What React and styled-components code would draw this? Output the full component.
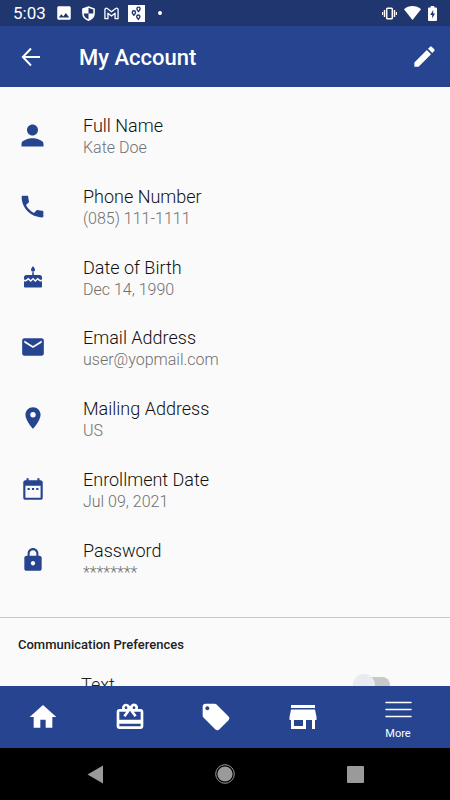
import React, { useState } from "react";
import styled, { createGlobalStyle } from "styled-components";
import {
  MdCardGiftcard,
  MdDateRange,
  MdEdit,
  MdEmail,
  MdHome,
  MdImage,
  MdLocalOffer,
  MdLock,
  MdPerson,
  MdPhone,
  MdPlace,
  MdStore,
} from "react-icons/md";

const GlobalStyle = createGlobalStyle`
  * {
    box-sizing: border-box;
  }

  body {
    margin: 0;
    font-family: Roboto, "Liberation Sans", sans-serif;
    background: #fafafa;
  }
`;

const Screen = styled.div`
  display: flex;
  flex-direction: column;
  height: 100vh;
  overflow: hidden;
`;

const StatusBar = styled.div`
  flex: none;
  display: flex;
  align-items: center;
  justify-content: space-between;
  height: 26px;
  padding: 0 13px;
  background: #20366f;
  color: white;

  svg {
    display: block;
  }
`;

const StatusGroup = styled.div`
  display: flex;
  align-items: center;
  gap: ${(props) => props.$gap}px;
`;

const Clock = styled.span`
  font-size: 17px;
  line-height: 26px;
`;

const Dot = styled.span`
  width: 4px;
  height: 4px;
  margin-left: 4px;
  border-radius: 50%;
  background: white;
`;

const AppBar = styled.header`
  flex: none;
  display: flex;
  align-items: center;
  height: 61px;
  padding: 0 13px 0 18px;
  background: #26448f;
  color: white;
`;

const IconButton = styled.button`
  display: flex;
  align-items: center;
  justify-content: center;
  width: 26px;
  height: 26px;
  padding: 0;
  border: none;
  background: none;
  color: inherit;
  cursor: pointer;

  svg {
    flex: none;
  }
`;

const Title = styled.h1`
  flex: 1;
  margin: 0 0 0 35px;
  padding-top: 2px;
  font-size: 22px;
  line-height: 28px;
  font-weight: 500;
`;

const Content = styled.main`
  flex: 1;
  min-height: 0;
  overflow-y: auto;
  scrollbar-width: none;
  background: #fafafa;
`;

const DetailList = styled.ul`
  display: grid;
  grid-auto-rows: 1fr;
  min-height: 495px;
  margin: 0;
  padding: 0 16px;
  list-style: none;
`;

const Section = styled.section`
  padding: ${(props) => props.$padding};
  border-bottom: ${(props) => (props.$divided ? "1px solid #c8c8c8" : "none")};
`;

const DetailRow = styled.li`
  display: flex;
  align-items: center;
  gap: 34px;
`;

const IconSlot = styled.span`
  flex: none;
  display: flex;
  justify-content: center;
  width: 33px;
  color: #26448f;
`;

const DetailText = styled.div`
  padding-top: 4px;
`;

const Label = styled.div`
  font-size: 18px;
  line-height: 22px;
  font-weight: 300;
  color: #111111;
`;

const Value = styled.div`
  font-size: 16px;
  line-height: 22px;
  font-weight: 300;
  color: #707070;
`;

const SectionTitle = styled.h2`
  margin: 0;
  font-size: 13px;
  line-height: 18px;
  font-weight: 500;
  color: #212121;
`;

const PreferenceRow = styled.label`
  display: flex;
  align-items: center;
  justify-content: space-between;
  padding: 20px 42px 20px 63px;
  font-size: 18px;
  line-height: 22px;
  font-weight: 300;
  color: #212121;
`;

const Switch = styled.input`
  appearance: none;
  position: relative;
  width: 34px;
  height: 16px;
  margin: 0;
  border-radius: 8px;
  background: #c8c8c8;
  cursor: pointer;

  &::before {
    content: "";
    position: absolute;
    top: -3px;
    left: ${(props) => (props.checked ? "15px" : "-3px")};
    width: 22px;
    height: 22px;
    border-radius: 50%;
    background: ${(props) => (props.checked ? "#26448f" : "#e8ebf0")};
  }
`;

const TabBar = styled.nav`
  flex: none;
  display: grid;
  grid-template-columns: repeat(4, 1fr) 104px;
  height: 62px;
  background: #26448f;
`;

const Tab = styled.a`
  display: flex;
  flex-direction: column;
  align-items: center;
  justify-content: center;
  gap: 8px;
  padding-top: ${(props) => (props.$labelled ? 8 : 0)}px;
  color: white;
  font-size: 11px;
  line-height: 16px;
  text-decoration: none;
`;

const SystemBar = styled.div`
  flex: none;
  display: grid;
  grid-template-columns: repeat(3, 1fr);
  justify-items: center;
  align-items: center;
  height: 52px;
  padding: 0 30px;
  background: black;
  color: #9a9a9a;
`;

const ShieldIcon = () => (
  <svg width="13" height="15" viewBox="0 0 14 16" fill="none">
    <path
      d="M7 1 L13 3.2 V7.5 C13 11 10.5 14 7 15.2 C3.5 14 1 11 1 7.5 V3.2 Z"
      stroke="white"
      strokeWidth="1.7"
    />
    <path d="M7 1 V8 H1 V3.2 Z M7 8 H13 C12.8 11.3 10.3 14 7 15.2 Z" fill="white" />
  </svg>
);

const MailIcon = () => (
  <svg width="15" height="13" viewBox="0 0 16 13" fill="none">
    <path
      d="M1 12 V2.3 C1 .9 2.5 .5 3.5 1.2 L8 4.7 L12.5 1.2 C13.5 .5 15 .9 15 2.3 V12 H11.8 V6.2 L8 9.2 L4.2 6.2 V12 Z"
      stroke="white"
      strokeWidth="1.4"
      strokeLinejoin="round"
    />
  </svg>
);

const PinsIcon = () => (
  <svg width="17" height="17" viewBox="0 0 17 17">
    <rect width="17" height="17" fill="white" />
    <g fill="white" stroke="#20366f" strokeWidth="1.4">
      <path d="M10.5 6.5 C9.3 5.2 8.9 4.3 8.9 3.7 A1.6 1.6 0 0 1 12.1 3.7 C12.1 4.3 11.700 5.2 10.5 6.5 Z" />
      <path d="M5.9 10.2 C4.7 8.9 4.3 8 4.3 7.4 A1.6 1.6 0 0 1 7.5 7.4 C7.5 8 7.1 8.9 5.9 10.2 Z" />
      <path d="M10.3 14.4 C9.1 13.1 8.7 12.2 8.7 11.6 A1.6 1.6 0 0 1 11.9 11.6 C11.9 12.2 11.5 13.1 10.3 14.4 Z" />
    </g>
  </svg>
);

const VibrateIcon = () => (
  <svg width="15" height="13" viewBox="0 0 15 13" fill="none" stroke="white">
    <rect x="4.7" y="1.2" width="5.6" height="10.6" rx=".8" strokeWidth="1.5" />
    <path d="M2.5 3 V10 M12.5 3 V10" strokeWidth="1.4" />
    <path d="M.6 5 V8 M14.4 5 V8" strokeWidth="1.2" />
  </svg>
);

const WifiIcon = () => (
  <svg width="17" height="14" viewBox="0 0 17 14" fill="white">
    <path d="M8.5 14 L0 3.3 C4.8 -1 12.2 -1 17 3.3 Z" />
  </svg>
);

const BatteryIcon = () => (
  <svg width="9" height="15" viewBox="0 0 9 15">
    <path d="M2.7 0 H6.3 V1.5 H8 Q9 1.5 9 2.5 V14 Q9 15 8 15 H1 Q0 15 0 14 V2.5 Q0 1.5 1 1.5 H2.7 Z" fill="white" />
    <path d="M5.2 4 L2.2 9 H4.2 V12.5 L7 7.5 H5.2 Z" fill="#20366f" />
  </svg>
);

const BackIcon = () => (
  <svg width="26" height="26" viewBox="0 0 26 26" fill="none" stroke="white" strokeWidth="1.9">
    <path d="M22 13 H5 M13 4.5 L4.8 13 L13 21.5" />
  </svg>
);

const CakeIcon = ({ size }) => (
  <svg width={size} height={size} viewBox="0 0 22 22" fill="currentColor">
    <path d="M11 0 C12.3 1.800 13 2.900 13 3.800 A2 2 0 0 1 9 3.800 C9 2.900 9.700 1.800 11 0 Z" />
    <path d="M10.200 6.300 H11.800 V9 H17.500 Q20 9 20 11.500 V13.600 Q18.700 14.300 17.500 13.200 L15.700 11.700 L13.300 14 L11 11.700 L8.700 14 L6.300 11.700 L4.500 13.200 Q3.300 14.300 2 13.600 V11.500 Q2 9 4.500 9 H10.200 Z" />
    <path d="M2 15.200 Q4 15.800 5.500 14.500 L6.300 13.800 L8.700 16 L11 13.800 L13.300 16 L15.700 13.800 L16.500 14.500 Q18 15.800 20 15.200 V20.500 Q20 21.500 19 21.500 H3 Q2 21.500 2 20.500 Z" />
  </svg>
);

const MenuIcon = () => (
  <svg width="27" height="17" viewBox="0 0 27 17" stroke="white" strokeWidth="1.5" strokeLinecap="round">
    <path d="M1 1.5 H26 M1 8.5 H26 M1 15.5 H26" />
  </svg>
);

const details = [
  { label: "Full Name", value: "Kate Doe", icon: MdPerson, size: 33 },
  { label: "Phone Number", value: "(085) 111-1111", icon: MdPhone, size: 29 },
  { label: "Date of Birth", value: "Dec 14, 1990", icon: CakeIcon, size: 22 },
  { label: "Email Address", value: "user@yopmail.com", icon: MdEmail, size: 26 },
  { label: "Mailing Address", value: "US", icon: MdPlace, size: 26 },
  { label: "Enrollment Date", value: "Jul 09, 2021", icon: MdDateRange, size: 26 },
  { label: "Password", value: "********", icon: MdLock, size: 26 },
];

const tabs = [
  { name: "Home", icon: MdHome, size: 32 },
  { name: "Rewards", icon: MdCardGiftcard, size: 32 },
  { name: "Offers", icon: MdLocalOffer, size: 32 },
  { name: "Stores", icon: MdStore, size: 36 },
];

const App = () => {
  const [textOn, setTextOn] = useState(false);

  return (
    <Screen>
      <GlobalStyle />
      <StatusBar>
        <StatusGroup $gap={9}>
          <Clock>5:03</Clock>
          <MdImage size={18} />
          <ShieldIcon />
          <MailIcon />
          <PinsIcon />
          <Dot />
        </StatusGroup>
        <StatusGroup $gap={7}>
          <VibrateIcon />
          <WifiIcon />
          <BatteryIcon />
        </StatusGroup>
      </StatusBar>

      <AppBar>
        <IconButton aria-label="Back">
          <BackIcon />
        </IconButton>
        <Title>My Account</Title>
        <IconButton aria-label="Edit">
          <MdEdit size={27} />
        </IconButton>
      </AppBar>

      <Content>
        <Section $padding="13px 0 22px" $divided>
          <DetailList>
            {details.map(({ label, value, icon: Icon, size }) => (
              <DetailRow key={label}>
                <IconSlot>
                  <Icon size={size} />
                </IconSlot>
                <DetailText>
                  <Label>{label}</Label>
                  <Value>{value}</Value>
                </DetailText>
              </DetailRow>
            ))}
          </DetailList>
        </Section>

        <Section $padding="18px 18px 0">
          <SectionTitle>Communication Preferences</SectionTitle>
          <PreferenceRow>
            Text
            <Switch
              type="checkbox"
              checked={textOn}
              onChange={(e) => setTextOn(e.target.checked)}
            />
          </PreferenceRow>
        </Section>
      </Content>

      <TabBar>
        {tabs.map(({ name, icon: Icon, size }) => (
          <Tab key={name} href="#" aria-label={name}>
            <Icon size={size} />
          </Tab>
        ))}
        <Tab href="#" $labelled>
          <MenuIcon />
          More
        </Tab>
      </TabBar>

      <SystemBar>
        <IconButton aria-label="System back">
          <svg width="17" height="19" viewBox="0 0 17 19" fill="currentColor">
            <path d="M16 .5 V18.5 L.5 9.5 Z" />
          </svg>
        </IconButton>
        <IconButton aria-label="System home">
          <svg width="20" height="20" viewBox="0 0 20 20">
            <circle cx="10" cy="10" r="9.3" fill="none" stroke="currentColor" />
            <circle cx="10" cy="10" r="7.6" fill="currentColor" />
          </svg>
        </IconButton>
        <IconButton aria-label="Recent apps">
          <svg width="17" height="17" viewBox="0 0 17 17" fill="currentColor">
            <rect width="17" height="17" rx="1" />
          </svg>
        </IconButton>
      </SystemBar>
    </Screen>
  );
};

export default App;
